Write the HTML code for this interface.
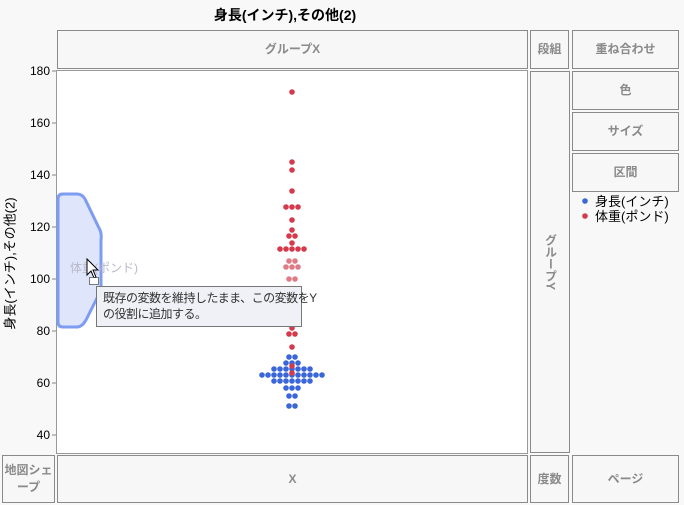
<!DOCTYPE html>
<html><head><meta charset="utf-8"><style>
*{margin:0;padding:0;box-sizing:border-box}
body{width:684px;height:505px;background:#f8f8f8;position:relative;overflow:hidden;font-family:"Liberation Sans","Noto Sans CJK JP",sans-serif}
.b{position:absolute;border:1px solid #8a8a8a;background:#f7f7f7;color:#8a8a8a;font-size:12px;font-weight:bold;display:flex;align-items:center;justify-content:center;text-align:center;line-height:17px}
.t{position:absolute;font-size:12px;color:#000}
.yl{position:absolute;right:634px;font-size:12px;color:#000;line-height:14px}
</style></head><body>
<div class="t" style="left:0;width:570px;top:5px;text-align:center;font-weight:bold;font-size:14px">身長(インチ),その他(2)</div>
<div class="b" style="left:57px;top:30px;width:471px;height:39px">グループX</div>
<div class="b" style="left:530px;top:30px;width:39px;height:39px">段組</div>
<div class="b" style="left:572px;top:30px;width:107px;height:39px">重ね合わせ</div>
<div class="b" style="left:572px;top:71px;width:107px;height:39px">色</div>
<div class="b" style="left:572px;top:112px;width:107px;height:39px">サイズ</div>
<div class="b" style="left:572px;top:153px;width:107px;height:39px">区間</div>
<div class="b" style="left:530px;top:71px;width:40px;height:382px"><span style="writing-mode:vertical-rl;font-weight:bold">グループY</span></div>
<div class="b" style="left:2px;top:455px;width:53px;height:48px">地図シェ<br>ープ</div>
<div class="b" style="left:57px;top:455px;width:471px;height:48px">X</div>
<div class="b" style="left:530px;top:455px;width:39px;height:48px">度数</div>
<div class="b" style="left:572px;top:455px;width:107px;height:48px">ページ</div>
<svg style="position:absolute;left:0;top:0" width="684" height="505">
<circle cx="585" cy="201" r="2.8" fill="#3a66d8"/><circle cx="585" cy="216" r="2.8" fill="#d43a4c"/>
</svg>
<div class="t" style="left:595px;top:194px;line-height:15px;font-size:13px">身長(インチ)<br>体重(ポンド)</div>
<div class="t" style="left:-66px;top:254px;width:150px;text-align:center;transform:rotate(-90deg);font-size:13px">身長(インチ),その他(2)</div>
<div class="yl" style="top:64px;right:634px">180</div>
<div class="yl" style="top:116px">160</div>
<div class="yl" style="top:168px">140</div>
<div class="yl" style="top:220px">120</div>
<div class="yl" style="top:272px">100</div>
<div class="yl" style="top:324px">80</div>
<div class="yl" style="top:376px">60</div>
<div class="yl" style="top:428px">40</div>
<svg style="position:absolute;left:0;top:0" width="684" height="505">
<g stroke="#888"><line x1="52" y1="71" x2="57" y2="71"/><line x1="52" y1="123" x2="57" y2="123"/><line x1="52" y1="175" x2="57" y2="175"/><line x1="52" y1="227" x2="57" y2="227"/><line x1="52" y1="279" x2="57" y2="279"/><line x1="52" y1="331" x2="57" y2="331"/><line x1="52" y1="383" x2="57" y2="383"/><line x1="52" y1="435" x2="57" y2="435"/></g>
<rect x="56.5" y="70.5" width="471" height="383" fill="#fff" stroke="#999"/>
<g fill="#3a66d8">
<circle cx="289" cy="357" r="2.8"/><circle cx="295" cy="357" r="2.8"/>
<circle cx="286" cy="363" r="2.8"/><circle cx="292" cy="363" r="2.8"/><circle cx="298" cy="363" r="2.8"/>
<circle cx="274" cy="369" r="2.8"/><circle cx="280" cy="369" r="2.8"/><circle cx="286" cy="369" r="2.8"/><circle cx="292" cy="369" r="2.8"/><circle cx="298" cy="369" r="2.8"/><circle cx="304" cy="369" r="2.8"/><circle cx="310" cy="369" r="2.8"/>
<circle cx="262" cy="375" r="2.8"/><circle cx="268" cy="375" r="2.8"/><circle cx="274" cy="375" r="2.8"/><circle cx="280" cy="375" r="2.8"/><circle cx="286" cy="375" r="2.8"/><circle cx="292" cy="375" r="2.8"/><circle cx="298" cy="375" r="2.8"/><circle cx="304" cy="375" r="2.8"/><circle cx="310" cy="375" r="2.8"/><circle cx="316" cy="375" r="2.8"/><circle cx="322" cy="375" r="2.8"/>
<circle cx="274" cy="381" r="2.8"/><circle cx="280" cy="381" r="2.8"/><circle cx="286" cy="381" r="2.8"/><circle cx="292" cy="381" r="2.8"/><circle cx="298" cy="381" r="2.8"/><circle cx="304" cy="381" r="2.8"/><circle cx="310" cy="381" r="2.8"/>
<circle cx="286" cy="388" r="2.8"/><circle cx="292" cy="388" r="2.8"/><circle cx="298" cy="388" r="2.8"/>
<circle cx="289" cy="396" r="2.8"/><circle cx="295" cy="396" r="2.8"/>
<circle cx="289" cy="406" r="2.8"/><circle cx="295" cy="406" r="2.8"/>
</g>
<g fill="#d43a4c">
<circle cx="292" cy="92" r="2.8"/><circle cx="292" cy="162" r="2.8"/><circle cx="292" cy="170" r="2.8"/><circle cx="292" cy="191" r="2.8"/>
<circle cx="286" cy="207" r="2.8"/><circle cx="292" cy="207" r="2.8"/><circle cx="298" cy="207" r="2.8"/>
<circle cx="292" cy="220" r="2.8"/><circle cx="292" cy="230" r="2.8"/><circle cx="289" cy="236" r="2.8"/><circle cx="295" cy="236" r="2.8"/><circle cx="292" cy="243" r="2.8"/>
<circle cx="280" cy="249" r="2.8"/><circle cx="286" cy="249" r="2.8"/><circle cx="292" cy="249" r="2.8"/><circle cx="298" cy="249" r="2.8"/><circle cx="304" cy="249" r="2.8"/>
<circle cx="292" cy="328" r="2.8"/><circle cx="289" cy="334" r="2.8"/><circle cx="295" cy="334" r="2.8"/><circle cx="292" cy="347" r="2.8"/>
<circle cx="292" cy="366" r="2.8"/><circle cx="292" cy="373" r="2.8"/>
</g>
<g fill="#e07a86">
<circle cx="289" cy="261" r="2.8"/><circle cx="295" cy="261" r="2.8"/>
<circle cx="286" cy="267" r="2.8"/><circle cx="292" cy="267" r="2.8"/><circle cx="298" cy="267" r="2.8"/>
<circle cx="289" cy="279" r="2.8"/><circle cx="295" cy="279" r="2.8"/>
</g>
<path d="M63 194 L77 194 Q82 194 85 199 L99 228 Q102 233 101 240 L101 290 L86 320 Q82 327 77 327 L63 327 Q58 327 58 322 L58 199 Q58 194 63 194 Z" fill="#dfe6fb" stroke="#7d9cf2" stroke-width="3"/>
<text x="70" y="272" font-size="12" fill="#b8b8c8" font-family="Liberation Sans,Noto Sans CJK JP,sans-serif">体重(ポンド)</text>
<path d="M87 259 L87 275 L91 271 L94 278 L96 277 L93 270 L98 270 Z" fill="#fff" stroke="#000" stroke-width="1"/>
<rect x="89.5" y="277.5" width="9" height="7" fill="#fff" stroke="#000" stroke-dasharray="1,1"/>
</svg>
<div style="position:absolute;left:96px;top:286px;width:206px;height:41px;border:1px solid #777;background:#eff1f7;font-size:12px;color:#333;padding:3px 0 0 6px;line-height:16px;white-space:nowrap;letter-spacing:-0.5px">既存の変数を維持したまま、この変数をY<br>の役割に追加する。</div>
</body></html>
